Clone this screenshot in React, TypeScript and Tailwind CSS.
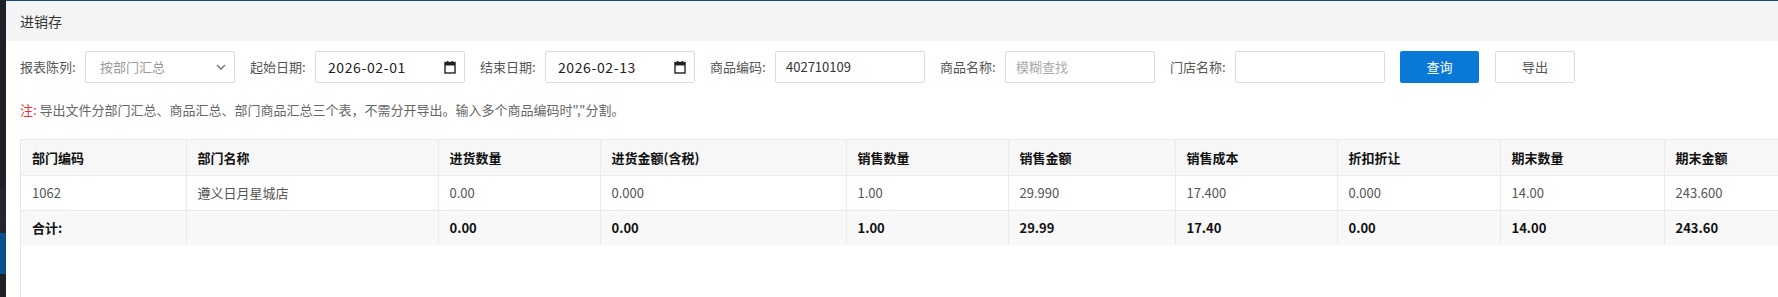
const font = { fontFamily: '"Microsoft YaHei", "Noto Sans CJK SC", "Noto Sans", sans-serif' }

const columns = [
  { key: 'code', label: '部门编码', width: 165 },
  { key: 'name', label: '部门名称', width: 252 },
  { key: 'inQty', label: '进货数量', width: 162 },
  { key: 'inAmt', label: '进货金额(含税)', width: 246 },
  { key: 'saleQty', label: '销售数量', width: 162 },
  { key: 'saleAmt', label: '销售金额', width: 167 },
  { key: 'saleCost', label: '销售成本', width: 162 },
  { key: 'discount', label: '折扣折让', width: 163 },
  { key: 'endQty', label: '期末数量', width: 164 },
  { key: 'endAmt', label: '期末金额', width: 200 },
] as const

type Row = Record<(typeof columns)[number]['key'], string>

const rows: Row[] = [
  {
    code: '1062',
    name: '遵义日月星城店',
    inQty: '0.00',
    inAmt: '0.000',
    saleQty: '1.00',
    saleAmt: '29.990',
    saleCost: '17.400',
    discount: '0.000',
    endQty: '14.00',
    endAmt: '243.600',
  },
]

const total: Row = {
  code: '合计:',
  name: '',
  inQty: '0.00',
  inAmt: '0.00',
  saleQty: '1.00',
  saleAmt: '29.99',
  saleCost: '17.40',
  discount: '0.00',
  endQty: '14.00',
  endAmt: '243.60',
}

function CalendarIcon() {
  return (
    <svg width="12" height="13" viewBox="0 0 12 13" className="shrink-0">
      <rect x="1" y="1.5" width="10" height="10.5" fill="none" stroke="#222" strokeWidth="1.4" />
      <rect x="1" y="1.5" width="10" height="3" fill="#222" />
      <rect x="3" y="0" width="1.4" height="2" fill="#222" />
      <rect x="7.6" y="0" width="1.4" height="2" fill="#222" />
    </svg>
  )
}

function Label({ text }: { text: string }) {
  return <span className="w-[58px] mr-[7px] shrink-0 whitespace-nowrap text-[13px] text-[#555]">{text}</span>
}

function DateBox({ value }: { value: string }) {
  return (
    <div className="w-[150px] h-[32px] shrink-0 flex items-center justify-between pl-[12px] pr-[8px] border border-[#dcdcdc] rounded-[2px] bg-white">
      <span className="text-[14px] text-[#222] tracking-[0.6px]">{value}</span>
      <CalendarIcon />
    </div>
  )
}

function TextBox({ value, placeholder }: { value?: string; placeholder?: string }) {
  return (
    <div className="w-[150px] h-[32px] shrink-0 flex items-center px-[10px] border border-[#dcdcdc] rounded-[2px] bg-white text-[13px]">
      {value ? <span className="text-[#333]">{value}</span> : <span className="text-[#aaa]">{placeholder}</span>}
    </div>
  )
}

export default function App() {
  return (
    <div className="flex w-full h-[297px] overflow-hidden bg-white" style={font}>
      <div className="w-[6px] shrink-0 flex flex-col bg-[#1e2227]">
        <div className="h-[188px]" />
        <div className="h-[45px] bg-[#24282e]" />
        <div className="h-[41px] bg-[#0b4f8c]" />
      </div>

      <div className="flex-1 min-w-0 flex flex-col border-t border-[#0b4a86]">
        <div className="h-[40px] shrink-0 flex items-center px-[14px] bg-[#f4f4f4] text-[14px] text-[#333]">
          进销存
        </div>

        <div className="pt-[10px] px-[14px] flex items-center">
          <Label text="报表陈列:" />
          <div className="w-[150px] h-[32px] shrink-0 flex items-center justify-between pl-[14px] pr-[8px] border border-[#dcdcdc] rounded-[2px] bg-white">
            <span className="text-[13px] text-[#999]">按部门汇总</span>
            <svg width="10" height="6" viewBox="0 0 10 6">
              <path d="M1 1l4 4 4-4" fill="none" stroke="#777" strokeWidth="1.5" />
            </svg>
          </div>

          <div className="ml-[15px] flex items-center">
            <Label text="起始日期:" />
            <DateBox value="2026-02-01" />
          </div>
          <div className="ml-[15px] flex items-center">
            <Label text="结束日期:" />
            <DateBox value="2026-02-13" />
          </div>
          <div className="ml-[15px] flex items-center">
            <Label text="商品编码:" />
            <TextBox value="402710109" />
          </div>
          <div className="ml-[15px] flex items-center">
            <Label text="商品名称:" />
            <TextBox placeholder="模糊查找" />
          </div>
          <div className="ml-[15px] flex items-center">
            <Label text="门店名称:" />
            <TextBox />
          </div>

          <button className="ml-[15px] w-[79px] h-[32px] shrink-0 rounded-[2px] bg-[#0a78d6] text-white text-[13px]">
            查询
          </button>
          <button className="ml-[16px] w-[80px] h-[32px] shrink-0 rounded-[2px] border border-[#dcdcdc] bg-white text-[#555] text-[13px]">
            导出
          </button>
        </div>

        <div className="mt-[17px] px-[14px] h-[20px] leading-[20px] text-[13px] text-[#666] whitespace-nowrap">
          <span className="text-[#f23030]">注:</span> 导出文件分部门汇总、商品汇总、部门商品汇总三个表，不需分开导出。输入多个商品编码时","分割。
        </div>

        <div className="mt-[19px] ml-[14px] flex-1 border-l border-t border-[#e8e8e8] overflow-hidden">
          <table className="table-fixed border-collapse text-[13px]" style={{ width: 1843 }}>
            <colgroup>
              {columns.map((c) => (
                <col key={c.key} style={{ width: c.width }} />
              ))}
            </colgroup>
            <thead>
              <tr className="h-[35px] bg-[#f7f7f7]">
                {columns.map((c) => (
                  <th
                    key={c.key}
                    className="px-[11px] text-left font-bold text-[#111] border-r border-b border-[#ebebeb] whitespace-nowrap"
                  >
                    {c.label}
                  </th>
                ))}
              </tr>
            </thead>
            <tbody>
              {rows.map((r, i) => (
                <tr key={i} className="h-[35px] bg-white">
                  {columns.map((c) => (
                    <td key={c.key} className="px-[11px] text-[#555] border-r border-b border-[#ebebeb] whitespace-nowrap">
                      {r[c.key]}
                    </td>
                  ))}
                </tr>
              ))}
              <tr className="h-[35px] bg-[#f8f8f8]">
                {columns.map((c) => (
                  <td key={c.key} className="px-[11px] font-bold text-[#111] border-r border-[#ebebeb] whitespace-nowrap">
                    {total[c.key]}
                  </td>
                ))}
              </tr>
            </tbody>
          </table>
        </div>
      </div>
    </div>
  )
}
